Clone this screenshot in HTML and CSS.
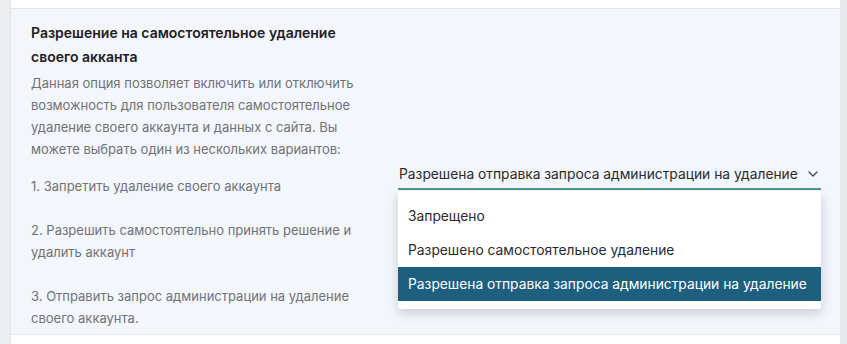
FILE: index.html
```html
<!DOCTYPE html>
<html lang="ru">
<head>
    <meta charset="UTF-8">
    <meta name="viewport" content="width=device-width, initial-scale=1.0">
    <title>Настройки аккаунта</title>
    <link rel="stylesheet" href="styles.css">
</head>
<body>
    <div class="page">
        <div class="side"></div>
        <div class="main">
            <div class="top-row"></div>
            <div class="setting">
                <div class="setting-info">
                    <h3>Разрешение на самостоятельное удаление своего акканта</h3>
                    <p class="intro">Данная опция позволяет включить или отключить возможность для пользователя самостоятельное удаление своего аккаунта и данных с сайта. Вы можете выбрать один из нескольких вариантов:</p>
                    <p class="item first">1. Запретить удаление своего аккаунта</p>
                    <p class="item">2. Разрешить самостоятельно принять решение и удалить аккаунт</p>
                    <p class="item">3. Отправить запрос администрации на удаление своего аккаунта.</p>
                </div>
                <div class="setting-control">
                    <div class="select">
                        <div class="select-value">
                            <span>Разрешена отправка запроса администрации на удаление</span>
                            <svg class="chevron" width="10" height="6" viewBox="0 0 10 6">
                                <path d="M1 1l4 4 4-4" fill="none" stroke="#444" stroke-width="1.3" stroke-linecap="round" stroke-linejoin="round"/>
                            </svg>
                        </div>
                        <ul class="select-menu">
                            <li>Запрещено</li>
                            <li>Разрешено самостоятельное удаление</li>
                            <li class="active">Разрешена отправка запроса администрации на удаление</li>
                        </ul>
                    </div>
                </div>
            </div>
            <div class="bottom-row"></div>
        </div>
        <div class="scroll"></div>
    </div>
</body>
</html>
```

FILE: styles.css
```css
body {
    margin: 0;
    padding: 0;
    font-family: Inter, "Noto Sans", sans-serif;
    background-color: #ebedf0;
    color: #222;
}
.page {
    display: flex;
    height: 344px;
    overflow: hidden;
}
.side {
    flex: 0 0 10px;
    background-color: #eceef1;
}
.scroll {
    flex: 0 0 5px;
    background-color: #e6e8eb;
}
.main {
    flex: 1;
    min-width: 0;
    display: flex;
    flex-direction: column;
    background: white;
    border-left: 1px solid #e2e5e9;
    border-right: 1px solid #e2e5e9;
    margin-right: 1px;
}
.top-row {
    height: 8px;
    background: white;
    border-bottom: 1px solid #e4e8ea;
}
.setting {
    display: flex;
    align-items: center;
    height: 326px;
    box-sizing: border-box;
    padding: 12px 20px 6px 20px;
    background-color: #f3f6fb;
    border-bottom: 1px solid #e6e9ed;
}
.setting-info {
    flex: 0 0 338px;
}
.setting-info h3 {
    margin: 0 0 3px 0;
    font-size: 14px;
    font-weight: 600;
    line-height: 24px;
    color: #1f2023;
}
.setting-info p {
    margin: 0;
    font-size: 13px;
    line-height: 22px;
    color: #707277;
}
.setting-info .item {
    margin-top: 22px;
}
.setting-info .item.first {
    margin-top: 15px;
}
.setting-control {
    flex: 1;
    display: flex;
    padding-left: 29px;
}
.select {
    position: relative;
    flex: 0 0 423px;
}
.select-value {
    display: flex;
    align-items: center;
    justify-content: space-between;
    height: 29px;
    padding: 0 3px 0 1px;
    font-size: 13.8px;
    color: #2a2b2e;
    border-bottom: 2px solid #4d9a8b;
}
.chevron {
    margin-top: 1px;
}
.select-menu {
    position: absolute;
    top: 32px;
    left: 0;
    right: 0;
    margin: 0;
    padding: 8px 0;
    list-style: none;
    background: white;
    box-shadow: 0 4px 12px rgba(0, 0, 0, 0.18);
    border-radius: 2px;
}
.select-menu li {
    height: 34px;
    line-height: 34px;
    padding: 0 10px;
    font-size: 13.8px;
    white-space: nowrap;
    color: #2a2b2e;
}
.select-menu li.active {
    background-color: #1e5f80;
    color: white;
}
.bottom-row {
    flex: 1;
    background: white;
}
```
